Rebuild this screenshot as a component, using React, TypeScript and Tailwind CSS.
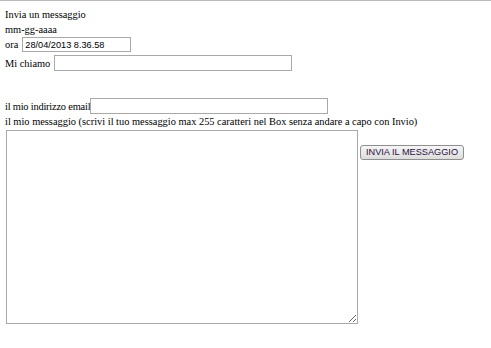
import React from 'react';

export default function App() {
  return (
    <div className="min-h-screen bg-white border-t border-[#b9b9b9] pl-[5px] pt-[6px] font-['Liberation_Serif',serif] text-[10.4px] leading-[15px] text-black">
      <div>Invia un messaggio</div>
      <div>mm-gg-aaaa</div>

      {/* ora */}
      <div className="flex items-center h-[15px]">
        <span>ora</span>
        <input
          defaultValue="28/04/2013 8.36.58"
          className="ml-[4px] w-[109px] h-[15px] border border-[#a9a9a9] px-[2px] font-['Liberation_Sans',sans-serif] text-[9.2px] leading-[13px] outline-none"
        />
      </div>

      {/* nome */}
      <div className="flex items-center h-[16px] mt-[3px]">
        <span>Mi chiamo</span>
        <input className="ml-[4px] w-[238px] h-[16px] border border-[#a9a9a9] outline-none" />
      </div>

      {/* email */}
      <div className="flex items-center h-[16px] mt-[27px]">
        <span className="tracking-[-0.2px]">il mio indirizzo email</span>
        <input className="w-[238px] h-[16px] border border-[#a9a9a9] outline-none" />
      </div>

      <div>
        il mio messaggio (scrivi il tuo messaggio max 255 caratteri nel Box senza andare a capo con Invio)
      </div>

      <div className="flex items-start mt-[1px]">
        <textarea className="ml-[1px] w-[352px] h-[194px] border border-[#a9a9a9] outline-none resize" />
        <button className="ml-[2px] mt-[15px] h-[15px] px-[5px] rounded-[3px] border border-[#8f8f8f] bg-gradient-to-b from-[#f6f6f6] to-[#dcdcdc] font-['Liberation_Sans',sans-serif] text-[9.2px] leading-[13px] text-[#2b0f3f]">
          INVIA IL MESSAGGIO
        </button>
      </div>
    </div>
  );
}
